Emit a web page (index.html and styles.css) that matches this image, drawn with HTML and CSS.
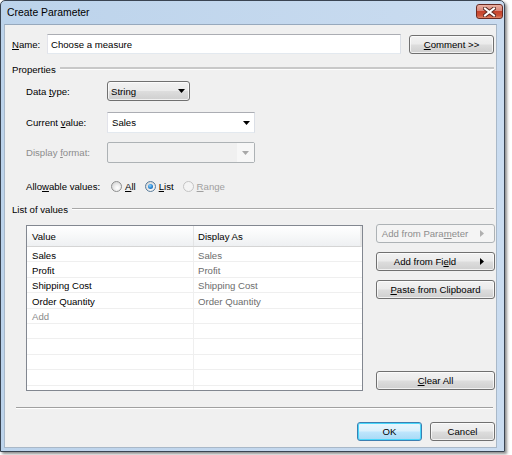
FILE: index.html
```html
<!DOCTYPE html>
<html>
<head>
<meta charset="utf-8">
<link rel="stylesheet" href="styles.css">
</head>
<body>
<div class="window">
  <div class="titlebar">
    <span class="title">Create Parameter</span>
    <div class="close">
      <svg width="13" height="10" viewBox="0 0 13 10">
        <path d="M2 1.5 L11 8.5 M11 1.5 L2 8.5" stroke="#5a2a22" stroke-width="4" stroke-linecap="square" fill="none"/>
        <path d="M2 1.5 L11 8.5 M11 1.5 L2 8.5" stroke="#ffffff" stroke-width="2" stroke-linecap="square" fill="none"/>
      </svg>
    </div>
  </div>
  <div class="client">
    <div class="name-row">
      <span class="name-label"><u>N</u>ame:</span>
      <div class="textbox name-box">Choose a measure</div>
      <div class="btn comment-btn"><span><u>C</u>omment &gt;&gt;</span></div>
    </div>

    <div class="group-head props-head">
      <span>Properties</span>
      <span class="rule rule-thick"></span>
    </div>

    <div class="prop-row row-type">
      <span class="plabel">Data <u>t</u>ype:</span>
      <div class="combo combo-btn">
        <span class="combo-text">String</span>
        <svg class="arrow" width="7" height="4" viewBox="0 0 7 4"><polygon points="0,0 7,0 3.5,4" fill="#000"/></svg>
      </div>
    </div>

    <div class="prop-row row-current">
      <span class="plabel">Current <u>v</u>alue:</span>
      <div class="combo combo-edit">
        <span class="combo-text">Sales</span>
        <svg class="arrow" width="7" height="4" viewBox="0 0 7 4"><polygon points="0,0 7,0 3.5,4" fill="#000"/></svg>
      </div>
    </div>

    <div class="prop-row row-format">
      <span class="plabel disabled">Display <u>f</u>ormat:</span>
      <div class="combo combo-disabled">
        <span class="combo-text"></span>
        <span class="drop-zone">
          <svg class="arrow" width="7" height="4" viewBox="0 0 7 4"><polygon points="0,0 7,0 3.5,4" fill="#a8a8a8"/></svg>
        </span>
      </div>
    </div>

    <div class="prop-row row-allow">
      <span class="plabel allow-label">Allo<u>w</u>able values:</span>
      <div class="radios">
        <span class="radio-item"><span class="radio"></span><span><u>A</u>ll</span></span>
        <span class="radio-item"><span class="radio checked"><span class="dot"></span></span><span><u>L</u>ist</span></span>
        <span class="radio-item disabled"><span class="radio radio-disabled"></span><span><u>R</u>ange</span></span>
      </div>
    </div>

    <div class="group-head list-head">
      <span>List of values</span>
      <span class="rule rule-thin"></span>
    </div>

    <div class="list-area">
      <div class="grid">
        <div class="grid-head">
          <div class="cell c1">Value</div>
          <div class="cell c2">Display As</div>
        </div>
        <div class="grid-row"><div class="cell c1">Sales</div><div class="cell c2 dim">Sales</div></div>
        <div class="grid-row"><div class="cell c1">Profit</div><div class="cell c2 dim">Profit</div></div>
        <div class="grid-row"><div class="cell c1">Shipping Cost</div><div class="cell c2 dim">Shipping Cost</div></div>
        <div class="grid-row"><div class="cell c1">Order Quantity</div><div class="cell c2 dim">Order Quantity</div></div>
        <div class="grid-row"><div class="cell c1 add">Add</div><div class="cell c2"></div></div>
        <div class="grid-row"><div class="cell c1"></div><div class="cell c2"></div></div>
        <div class="grid-row"><div class="cell c1"></div><div class="cell c2"></div></div>
        <div class="grid-row"><div class="cell c1"></div><div class="cell c2"></div></div>
        <div class="grid-row"><div class="cell c1"></div><div class="cell c2"></div></div>
        <div class="grid-row last"><div class="cell c1"></div><div class="cell c2"></div></div>
      </div>
      <div class="side-buttons">
        <div class="btn side-btn btn-disabled">
          <span class="btn-text">Add from Para<u>m</u>eter</span>
          <svg class="rarrow" width="4" height="7" viewBox="0 0 4 7"><polygon points="0,0 4,3.5 0,7" fill="#b0b0b0"/></svg>
        </div>
        <div class="btn side-btn">
          <span class="btn-text">Add from Fi<u>e</u>ld</span>
          <svg class="rarrow" width="4" height="7" viewBox="0 0 4 7"><polygon points="0,0 4,3.5 0,7" fill="#000"/></svg>
        </div>
        <div class="btn side-btn center">
          <span class="btn-text"><u>P</u>aste from Clipboard</span>
        </div>
        <div class="spacer"></div>
        <div class="btn side-btn center">
          <span class="btn-text"><u>C</u>lear All</span>
        </div>
      </div>
    </div>

    <div class="separator"></div>

    <div class="footer">
      <div class="btn foot-btn btn-default"><span>OK</span></div>
      <div class="btn foot-btn"><span>Cancel</span></div>
    </div>
  </div>
</div>
</body>
</html>
```

FILE: styles.css
```css
html, body {
  margin: 0;
  padding: 0;
  background: #ffffff;
}

body {
  font-family: "Liberation Sans", Arial, sans-serif;
  font-size: 9.6px;
  color: #000;
  width: 512px;
  height: 455px;
  overflow: hidden;
}

u {
  text-decoration: underline;
  text-underline-offset: 1px;
}

.window {
  box-sizing: border-box;
  width: 505px;
  height: 452px;
  border: 1px solid #3a4452;
  border-radius: 5px 5px 0 0;
  background: linear-gradient(to right, #bcd3eb, #cadcf0);
  box-shadow: 2px 2px 3px rgba(0, 0, 0, 0.45);
  display: flex;
  flex-direction: column;
}

.titlebar {
  height: 23px;
  display: flex;
  align-items: flex-start;
  flex-shrink: 0;
}

.title {
  font-size: 10.4px;
  margin-left: 6px;
  margin-top: 6px;
  color: #000;
}

.close {
  margin-left: auto;
  margin-right: 1px;
  margin-top: 3px;
  width: 27px;
  height: 15px;
  box-sizing: border-box;
  border: 1px solid #6b2a22;
  border-radius: 3px;
  background: linear-gradient(#eab0a2 0%, #d8867a 45%, #c5432c 50%, #cc5238 80%, #e0876a 100%);
  display: flex;
  align-items: center;
  justify-content: center;
}

.client {
  box-sizing: border-box;
  margin: 0 7px 3px 3px;
  height: 424px;
  background: #f0f0f0;
  border: 1px solid #a9b8c8;
  border-top-color: #97a9bd;
  padding: 9px 1px 0 7px;
}

/* Name row */
.name-row {
  display: flex;
  align-items: center;
  height: 20px;
}

.name-label {
  width: 35px;
}

.textbox {
  box-sizing: border-box;
  background: #fff;
  border: 1px solid;
  border-color: #abadb3 #dbdfe6 #e3e9ef #e2e3ea;
}

.name-box {
  width: 354px;
  height: 20px;
  padding-left: 3px;
  display: flex;
  align-items: center;
}

.btn {
  box-sizing: border-box;
  border: 1px solid #707070;
  border-radius: 3px;
  background: linear-gradient(#f2f2f2 0%, #ebebeb 48%, #dddddd 52%, #cfcfcf 100%);
  box-shadow: inset 0 0 0 1px rgba(255, 255, 255, 0.7);
  display: flex;
  align-items: center;
  justify-content: center;
  height: 19px;
}

.comment-btn {
  width: 85px;
  margin-left: 8px;
  margin-top: 1px;
}

/* group heads */
.group-head {
  display: flex;
  align-items: center;
  height: 12px;
  width: 482px;
}

.props-head {
  margin-top: 9px;
}

.list-head {
  margin-top: 10px;
}

.rule {
  flex: 1;
  margin-left: 4px;
  margin-top: -1px;
}

.rule-thick {
  height: 0;
  border-top: 2px solid #c8c8c8;
  border-bottom: 1px solid #fdfdfd;
}

.rule-thin {
  height: 0;
  border-top: 1px solid #a8a8a8;
  border-bottom: 1px solid #ffffff;
}

/* property rows */
.prop-row {
  display: flex;
  align-items: center;
  padding-left: 14px;
}

.plabel {
  width: 81px;
  flex-shrink: 0;
  white-space: nowrap;
}

.allow-label {
  width: 85px;
}

.disabled {
  color: #8d8d8d;
}

.row-type {
  margin-top: 6px;
  height: 20px;
}

.row-current {
  margin-top: 11px;
  height: 21px;
}

.row-format {
  margin-top: 9px;
  height: 21px;
}

.row-allow {
  margin-top: 16px;
  height: 14px;
}

.combo {
  box-sizing: border-box;
  display: flex;
  align-items: center;
  padding-left: 3px;
}

.combo-text {
  flex: 1;
}

.combo-btn {
  width: 83px;
  height: 20px;
  border: 1px solid #707070;
  border-radius: 3px;
  background: linear-gradient(#f2f2f2 0%, #ebebeb 48%, #dddddd 52%, #cfcfcf 100%);
  box-shadow: inset 0 0 0 1px rgba(255, 255, 255, 0.7);
  padding-right: 4px;
}

.combo-edit {
  width: 148px;
  height: 21px;
  background: #fff;
  border: 1px solid;
  border-color: #abadb3 #dbdfe6 #e3e9ef #e2e3ea;
  padding-right: 4px;
  padding-left: 4px;
}

.combo-disabled {
  width: 148px;
  height: 21px;
  background: #f0f0f0;
  border: 1px solid #adb2b5;
  border-radius: 2px;
  padding: 0;
}

.drop-zone {
  width: 17px;
  align-self: stretch;
  background: #f7f7f7;
  display: flex;
  align-items: center;
  justify-content: center;
}

.arrow {
  display: block;
  flex-shrink: 0;
}

/* radios */
.radios {
  display: flex;
  align-items: center;
}

.radio-item {
  display: flex;
  align-items: center;
  margin-right: 9px;
}

.radio-item.disabled {
  color: #a0a0a0;
}

.radio {
  box-sizing: border-box;
  width: 11px;
  height: 11px;
  border-radius: 50%;
  border: 1px solid #8e8f8f;
  background: radial-gradient(circle at 60% 65%, #ffffff 0%, #f0f0f0 35%, #c9c9c9 100%);
  margin-right: 3px;
  display: flex;
  align-items: center;
  justify-content: center;
}

.radio.checked {
  border-color: #5a7d9c;
}

.dot {
  width: 5px;
  height: 5px;
  border-radius: 50%;
  background: radial-gradient(circle at 40% 35%, #8fd4ff 0%, #2c8ad6 50%, #0f4f8f 100%);
}

.radio-disabled {
  border-color: #c4c4c4;
  background: #f4f4f4;
}

/* list area */
.list-area {
  display: flex;
  margin-top: 9px;
  margin-left: 14px;
  height: 167px;
}

.grid {
  box-sizing: border-box;
  width: 337px;
  height: 166px;
  margin-top: 1px;
  border: 1px solid #828790;
  background: #fff;
  overflow: hidden;
}

.grid-head,
.grid-row {
  display: grid;
  grid-template-columns: 167px 1fr;
}

.grid-head {
  height: 21px;
  box-sizing: border-box;
  background: linear-gradient(#ffffff 0%, #f7f8f9 50%, #eef0f2 100%);
  border-bottom: 1px solid #d5d5d5;
  border-right: 2px solid #e8e8e8;
}

.grid-head .cell {
  display: flex;
  align-items: center;
}

.grid-head .c1 {
  border-right: 1px solid #e3e4e5;
}

.grid-row {
  height: 15.4px;
  box-sizing: border-box;
  border-bottom: 1px solid #efefef;
}

.grid-row .cell {
  padding-top: 2px;
}

.grid-row .c1 {
  border-right: 1px solid #efefef;
}

.cell {
  display: flex;
  align-items: center;
  white-space: nowrap;
}

.c1 {
  padding-left: 5px;
}

.c2 {
  padding-left: 4px;
}

.dim {
  color: #6d6d6d;
}

.add {
  color: #8a8a8a;
}

.side-buttons {
  display: flex;
  flex-direction: column;
  margin-left: 13px;
  width: 119px;
}

.side-btn {
  height: 19px;
  margin-bottom: 9px;
  padding-right: 10px;
}

.side-btn .btn-text {
  flex: 1;
  text-align: center;
}

.side-btn.center {
  padding-right: 0;
}

.rarrow {
  display: block;
  margin-left: 7px;
  flex-shrink: 0;
}

.btn-disabled {
  border-color: #adb2b5;
  background: #f4f4f4;
  color: #8d8d8d;
  box-shadow: none;
}

.spacer {
  flex: 1;
}

.side-buttons .btn:last-child {
  margin-bottom: 1px;
}

.separator {
  margin-top: 16px;
  margin-left: 4px;
  width: 477px;
  height: 0;
  border-top: 1px solid #a0a0a0;
  border-bottom: 1px solid #ffffff;
}

.footer {
  display: flex;
  justify-content: flex-end;
  margin-top: 13px;
  gap: 8px;
  padding-right: 0;
}

.foot-btn {
  width: 65px;
  height: 19px;
}

.btn-default {
  border-color: #3c7fb1;
  background: linear-gradient(#eaf6fd 0%, #d9f0fc 48%, #bee6fd 52%, #a7d9f5 100%);
  box-shadow: inset 0 0 0 1px #48d7fb;
}
```
